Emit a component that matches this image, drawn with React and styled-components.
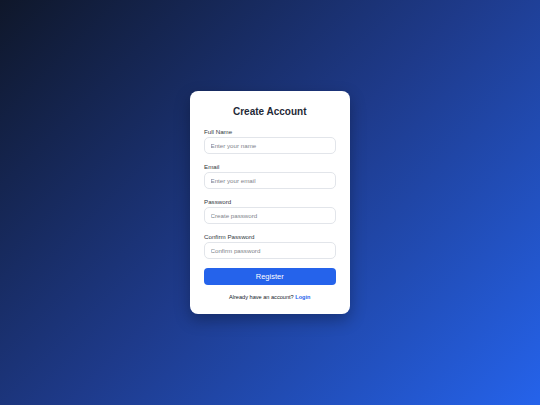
import React from 'react';
import styled, { createGlobalStyle } from 'styled-components';

const GlobalStyle = createGlobalStyle`
  * {
    box-sizing: border-box;
  }

  body {
    margin: 0;
    font-family: "Liberation Sans", Arial, sans-serif;
  }
`;

const Page = styled.div`
  min-height: 100vh;
  display: flex;
  align-items: center;
  justify-content: center;
  background: linear-gradient(135deg, #0f172a 0%, #1e3a8a 50%, #2563eb 100%);
`;

const Card = styled.form`
  width: 160px;
  padding: 15px 14.5px 13px 14px;
  background: #ffffff;
  border-radius: 8px;
  box-shadow: 0 6px 16px rgba(0, 0, 0, 0.3);
`;

const Title = styled.h2`
  margin: 0 0 10px;
  font-size: 10px;
  line-height: 12px;
  font-weight: 700;
  color: #1f2937;
  text-align: center;
`;

const Field = styled.div`
  display: flex;
  flex-direction: column;
  gap: 1px;
  margin-bottom: 9px;
`;

const Label = styled.label`
  font-size: 6.2px;
  line-height: 8px;
  color: #333842;
`;

const Input = styled.input`
  width: 100%;
  height: 17px;
  padding: 0 5.5px;
  border: 1px solid #e2e5ea;
  border-radius: 5px;
  font-family: inherit;
  font-size: 6.2px;
  color: #1f2937;
  outline: none;

  &::placeholder {
    color: #80848b;
  }
`;

const SubmitButton = styled.button`
  display: block;
  width: 100%;
  height: 17px;
  border: none;
  border-radius: 4px;
  background: #2563eb;
  color: #ffffff;
  font-family: inherit;
  font-size: 7.5px;
  cursor: pointer;
`;

const Footer = styled.p`
  margin: 8px 0 0;
  font-size: 5.6px;
  line-height: 8px;
  color: #111827;
  text-align: center;
`;

const FooterLink = styled.a`
  color: #2563eb;
  font-weight: 700;
  text-decoration: none;
`;

const fields = [
  { id: 'name', label: 'Full Name', type: 'text', placeholder: 'Enter your name' },
  { id: 'email', label: 'Email', type: 'email', placeholder: 'Enter your email' },
  { id: 'password', label: 'Password', type: 'password', placeholder: 'Create password' },
  { id: 'confirm', label: 'Confirm Password', type: 'password', placeholder: 'Confirm password' },
];

export default function App() {
  return (
    <Page>
      <GlobalStyle />
      <Card onSubmit={(e) => e.preventDefault()}>
        <Title>Create Account</Title>

        {fields.map((f) => (
          <Field key={f.id}>
            <Label htmlFor={f.id}>{f.label}</Label>
            <Input id={f.id} type={f.type} placeholder={f.placeholder} />
          </Field>
        ))}

        <SubmitButton type="submit">Register</SubmitButton>

        <Footer>
          Already have an account? <FooterLink href="#">Login</FooterLink>
        </Footer>
      </Card>
    </Page>
  );
}
